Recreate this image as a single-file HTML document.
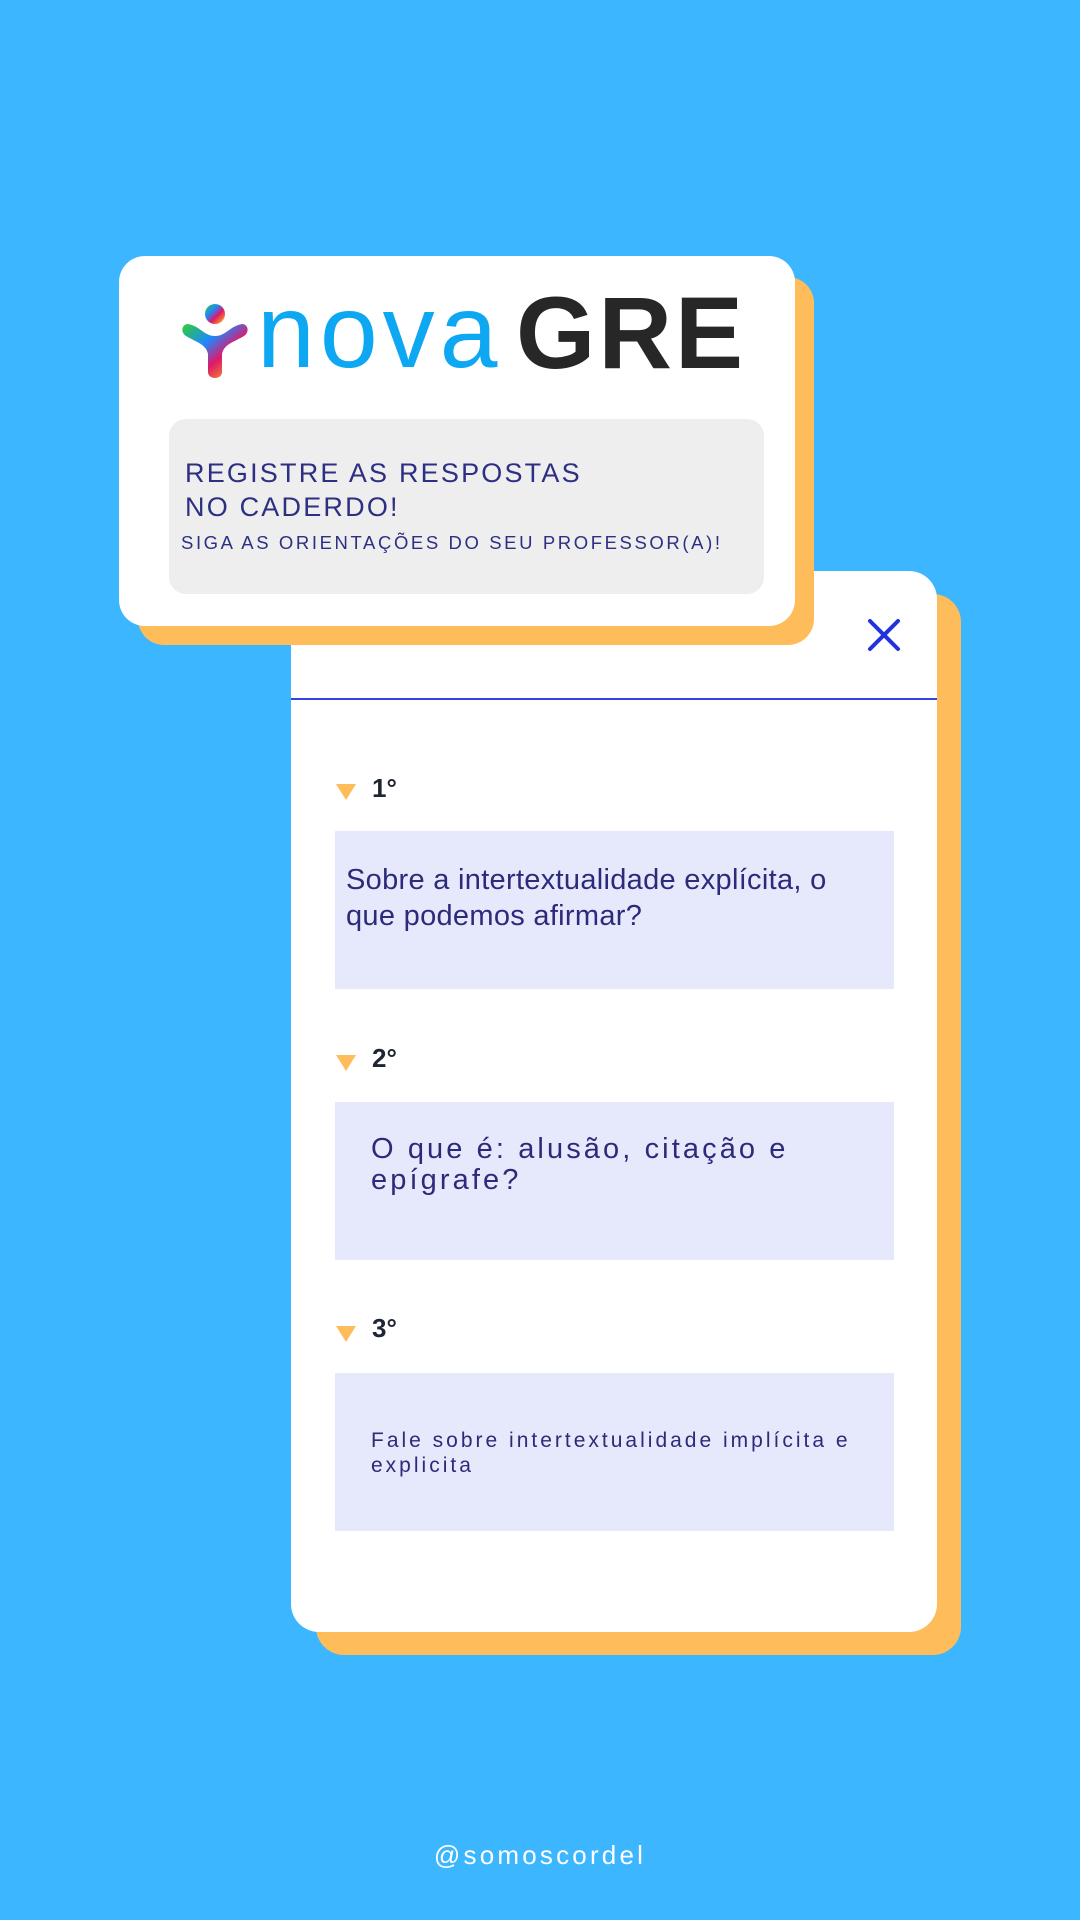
<!DOCTYPE html>
<html><head><meta charset="utf-8"><style>
*{margin:0;padding:0;box-sizing:border-box}
body{width:1080px;height:1920px;background:#3bb6ff;position:relative;overflow:hidden;font-family:"Liberation Sans",sans-serif}
.a{position:absolute}
.t{white-space:nowrap}
</style></head><body>
<div class="a" style="left:316px;top:594px;width:645px;height:1061px;background:#febc5a;border-radius:28px"></div>
<div class="a" style="left:291px;top:571px;width:646px;height:1061px;background:#fff;border-radius:28px"></div>
<div class="a" style="left:291px;top:698px;width:646px;height:2px;background:#3344dd"></div>
<svg class="a" style="left:866px;top:618px" width="36" height="34" viewBox="0 0 36 34"><path d="M4 3L32 31M32 3L4 31" stroke="#2233dd" stroke-width="4" stroke-linecap="round"/></svg>

<div class="a" style="left:138px;top:277px;width:676px;height:368px;background:#febc5a;border-radius:26px"></div>
<div class="a" style="left:119px;top:256px;width:676px;height:370px;background:#fff;border-radius:26px"></div>
<svg class="a" style="left:180px;top:302px" width="72" height="78" viewBox="0 0 72 78">
<defs><linearGradient id="g" x1="0" y1="0" x2="1" y2="1"><stop offset="0" stop-color="#2fd02f"/><stop offset="0.35" stop-color="#1e88ff"/><stop offset="0.6" stop-color="#e0186a"/><stop offset="1" stop-color="#ffd400"/></linearGradient></defs>
<circle cx="35" cy="12" r="10" fill="url(#g)"/>
<path d="M8 22C2 22 0 30 6 34C16 40 26 42 28 52L28 70C28 78 42 78 42 70L42 52C44 42 54 40 64 34C70 30 68 22 62 22C50 24 46 34 35 34C24 34 20 24 8 22Z" fill="url(#g)"/>
</svg>
<div class="a t" style="left:257px;top:280px;font-size:104px;color:#0ea7f2;letter-spacing:5px;line-height:104px">nova</div>
<div class="a t" style="left:516px;top:282px;font-size:102px;font-weight:700;color:#272727;line-height:102px;letter-spacing:3px">GRE</div>

<div class="a" style="left:169px;top:419px;width:595px;height:175px;background:#eeeeee;border-radius:17px"></div>
<div class="a t" style="left:185px;top:456px;font-size:27px;color:#2d2f83;letter-spacing:2.2px;line-height:34px;font-weight:500">REGISTRE AS RESPOSTAS<br>NO CADERDO!</div>
<div class="a t" style="left:181px;top:531px;font-size:18.5px;color:#2d2f83;letter-spacing:2.6px;line-height:24px">SIGA AS ORIENTAÇÕES DO SEU PROFESSOR(A)!</div>

<svg class="a" style="left:336px;top:784px" width="20" height="16"><path d="M0 0H20L10 16Z" fill="#febc5a"/></svg>
<div class="a t" style="left:372px;top:773px;font-size:26px;font-weight:700;color:#1f2533">1°</div>
<div class="a" style="left:335px;top:831px;width:559px;height:158px;background:#e6e8fc"></div>
<div class="a t" style="left:346px;top:862px;font-size:29px;color:#2b2b7a;line-height:36px;letter-spacing:0.3px">Sobre a intertextualidade explícita, o<br>que podemos afirmar?</div>

<svg class="a" style="left:336px;top:1055px" width="20" height="16"><path d="M0 0H20L10 16Z" fill="#febc5a"/></svg>
<div class="a t" style="left:372px;top:1043px;font-size:26px;font-weight:700;color:#1f2533">2°</div>
<div class="a" style="left:335px;top:1102px;width:559px;height:158px;background:#e6e8fc"></div>
<div class="a t" style="left:371px;top:1134px;font-size:29px;color:#2b2b7a;line-height:31px;letter-spacing:3.1px">O que é: alusão, citação e<br>epígrafe?</div>

<svg class="a" style="left:336px;top:1326px" width="20" height="16"><path d="M0 0H20L10 16Z" fill="#febc5a"/></svg>
<div class="a t" style="left:372px;top:1313px;font-size:26px;font-weight:700;color:#1f2533">3°</div>
<div class="a" style="left:335px;top:1373px;width:559px;height:158px;background:#e6e8fc"></div>
<div class="a t" style="left:371px;top:1428px;font-size:21px;color:#2b2b7a;line-height:25px;letter-spacing:3px">Fale sobre intertextualidade implícita e<br>explicita</div>

<div class="a t" style="left:0;width:1080px;text-align:center;top:1840px;font-size:26px;color:#fff;letter-spacing:3.2px">@somoscordel</div>
</body></html>
